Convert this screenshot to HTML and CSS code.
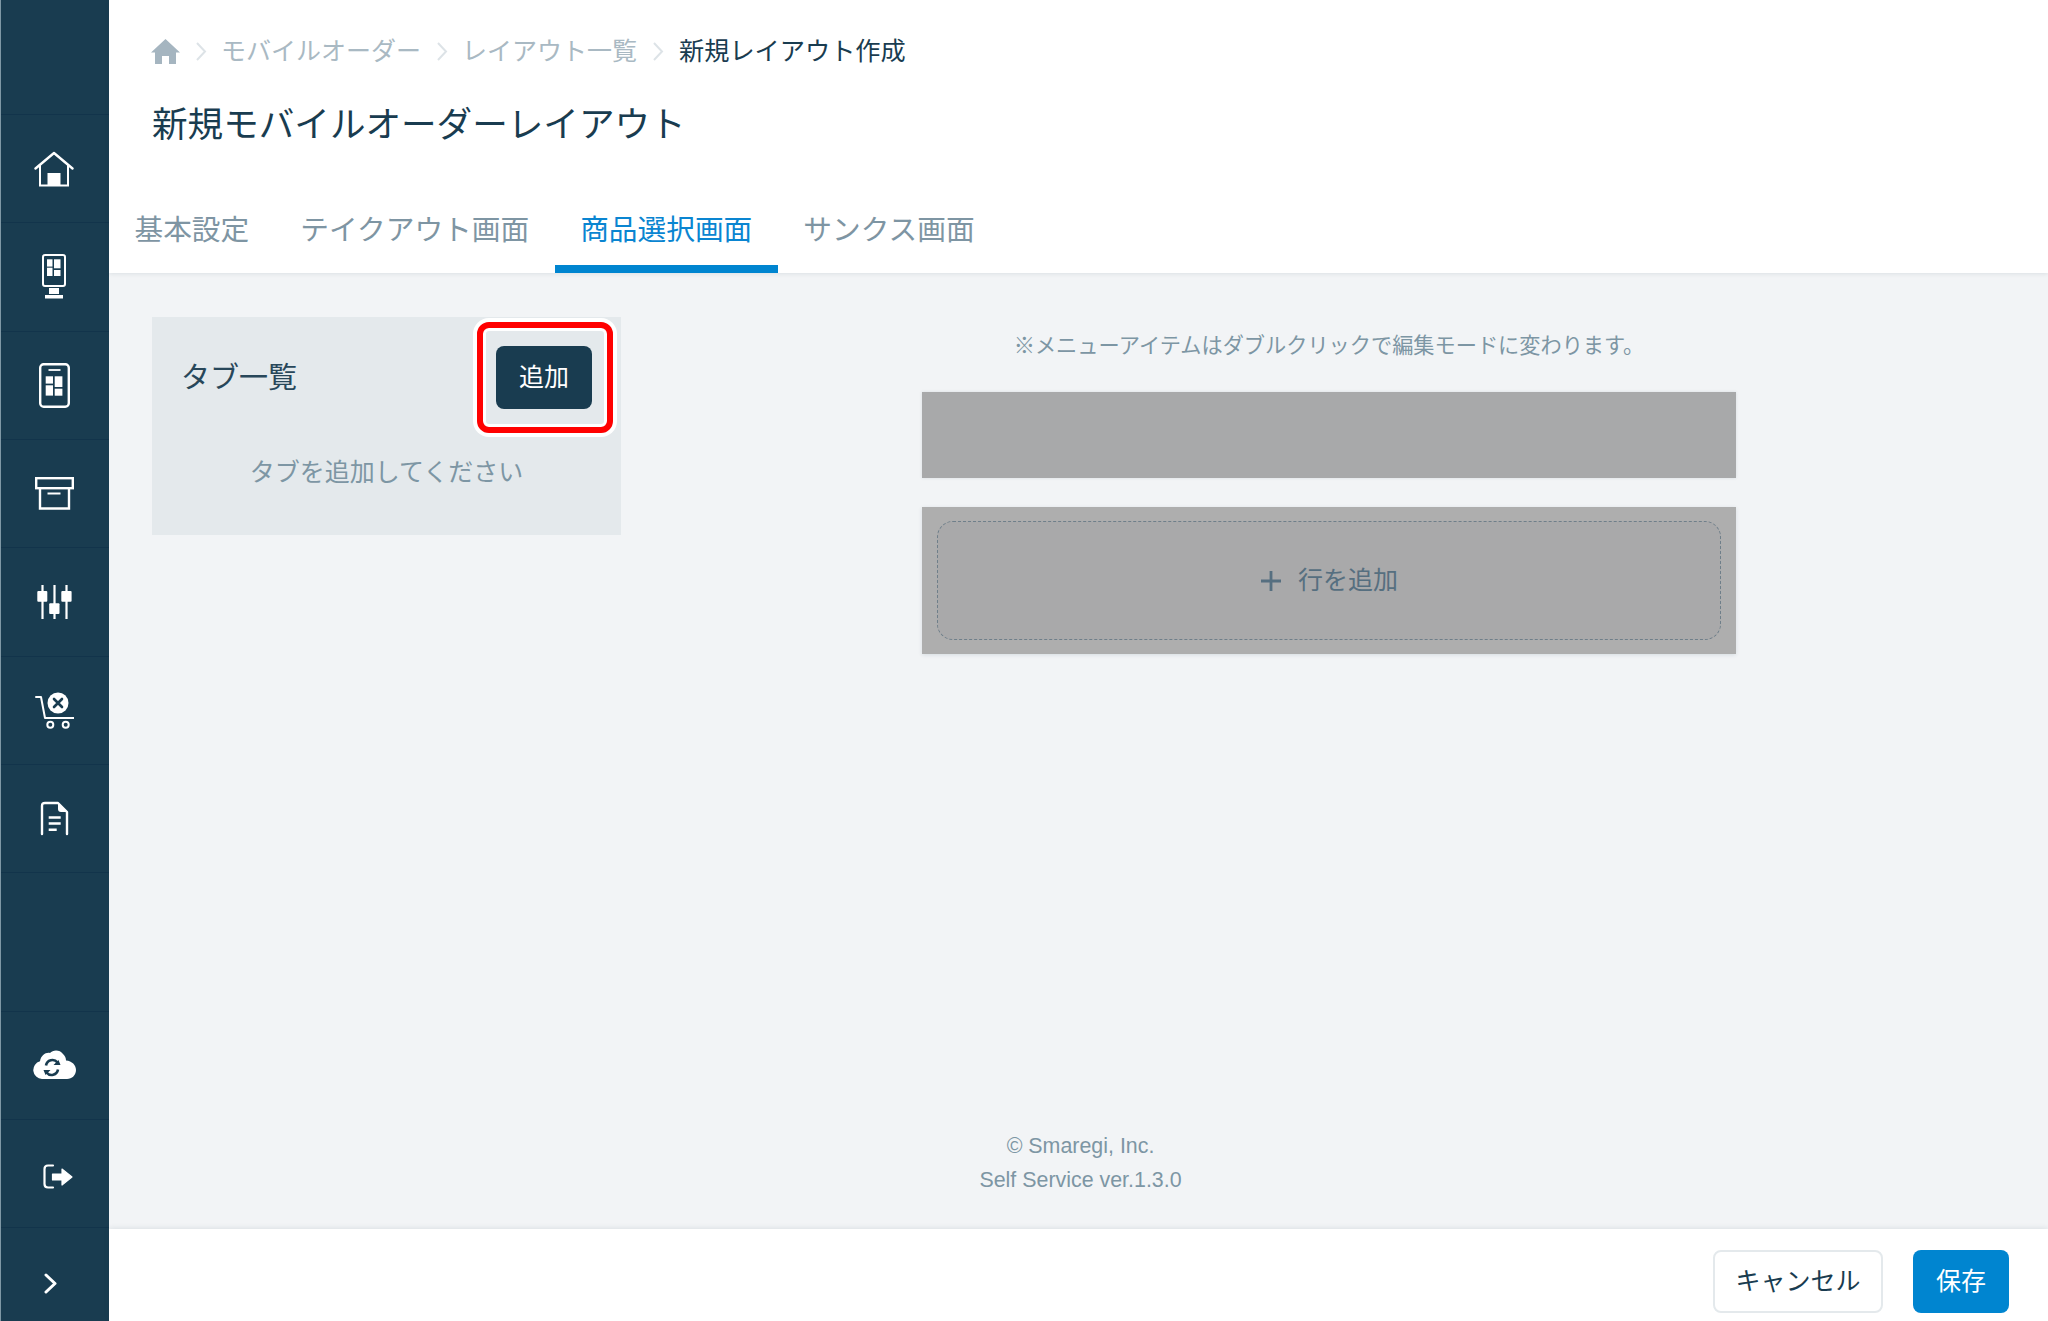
FILE: index.html
```html
<!DOCTYPE html>
<html lang="ja">
<head>
<meta charset="utf-8">
<title>新規モバイルオーダーレイアウト</title>
<link rel="stylesheet" href="styles.css">
</head>
<body>
<div class="app">
  <nav class="sidebar">
    <div class="brand"></div>
    <a class="nav-item"><svg width="40" height="36" viewBox="0 0 40 36"><path d="M1.500 17.500 20 2l18.500 15.500" fill="none" stroke="#fff" stroke-width="2.400" stroke-linecap="round" stroke-linejoin="round"/><path d="M6 14v20.500h28V14" fill="none" stroke="#fff" stroke-width="2"/><rect x="13.500" y="22" width="13" height="12" fill="#fff"/></svg></a>
    <a class="nav-item"><svg width="24" height="45" viewBox="0 0 24 45"><rect x="1" y="1" width="22" height="31" rx="2" fill="none" stroke="#fff" stroke-width="2"/><g fill="#fff"><rect x="5" y="5.300" width="5.500" height="7.300"/><rect x="12" y="5.300" width="6.500" height="9"/><rect x="5" y="13.700" width="5.500" height="8.300"/><rect x="12" y="16" width="6.500" height="6"/><rect x="7" y="34" width="10" height="6"/><rect x="3" y="41" width="18" height="3.500"/></g></svg></a>
    <a class="nav-item"><svg width="31" height="45" viewBox="0 0 31 45"><rect x="1.200" y="1.200" width="28.600" height="42.600" rx="3.500" fill="none" stroke="#fff" stroke-width="2.400"/><path d="M9.500 7h12" stroke="#fff" stroke-width="1.800"/><g fill="#fff"><rect x="6.700" y="13.300" width="7.300" height="7.300"/><rect x="15.700" y="13.300" width="7.700" height="10.700"/><rect x="6.700" y="22.300" width="7.300" height="10.300"/><rect x="15.700" y="25.700" width="7.700" height="7"/></g></svg></a>
    <a class="nav-item"><svg width="39" height="33" viewBox="0 0 39 33"><rect x="1.200" y="1.200" width="36.600" height="10" fill="none" stroke="#fff" stroke-width="2.400"/><path d="M5 11v20.500h29V11" fill="none" stroke="#fff" stroke-width="2.400"/><path d="M12.500 16.500h13" stroke="#fff" stroke-width="2"/></svg></a>
    <a class="nav-item"><svg width="35" height="34" viewBox="0 0 35 34"><path d="M5.500 0v34M17.500 0v34M29.500 0v34" stroke="#fff" stroke-width="2.200"/><g fill="#fff"><rect x="0.300" y="6" width="10" height="10.700" rx="1"/><rect x="12.200" y="18.300" width="10.300" height="10.700" rx="1"/><rect x="24.300" y="6" width="10.300" height="10.700" rx="1"/></g></svg></a>
    <a class="nav-item"><svg width="39" height="37" viewBox="0 0 39 37"><path d="M1 5h5l4 21h28.500" fill="none" stroke="#fff" stroke-width="2" stroke-linecap="round" stroke-linejoin="round"/><circle cx="23" cy="11" r="10.500" fill="#fff"/><path d="m19 7 8 8m0-8-8 8" stroke="#193c50" stroke-width="2.600" stroke-linecap="round"/><circle cx="15.300" cy="32.700" r="3" fill="none" stroke="#fff" stroke-width="2"/><circle cx="30.700" cy="32.700" r="3" fill="none" stroke="#fff" stroke-width="2"/></svg></a>
    <a class="nav-item"><svg width="29" height="35" viewBox="0 0 29 35"><path d="M2 33V5q0-3 3-3h13l9 9v22" fill="none" stroke="#fff" stroke-width="2.400" stroke-linecap="round" stroke-linejoin="round"/><path d="M18 2v6q0 3 3 3h6z" fill="#fff"/><path d="M8.700 16.500h12M8.700 22.500h12M8.700 28.700h8" stroke="#fff" stroke-width="2.400"/></svg></a>
    <div class="nav-spacer"></div>
    <a class="nav-item nav-item-top"><svg width="43" height="29" viewBox="0 0 43 29"><path d="M9 29a9 9 0 0 1-2-17.700C8 5 13 2 17 3c3-3.500 10-3.500 13 1 2 2 3 4 3 6.500 6 .5 10 4.500 10 9.500 0 5-4 9-9 9z" fill="#fff"/><path d="M13 15.500a6.500 6.500 0 0 1 11.500-3M25 19.500a6.500 6.500 0 0 1-11.500 3" fill="none" stroke="#193c50" stroke-width="2.600"/><path d="M27.500 15h-7l5-5zM10.500 20h7l-5 5z" fill="#193c50"/></svg></a>
    <a class="nav-item nav-item-logout"><svg width="30" height="25" viewBox="0 0 30 25"><path d="M10 1.500H5Q1.500 1.500 1.500 5v15q0 3.500 3.500 3.500h5" fill="none" stroke="#fff" stroke-width="2.200" stroke-linecap="round"/><path d="M9.500 10H19V5l10 8-10 8v-5H9.500z" fill="#fff" stroke="#fff" stroke-width="1.200" stroke-linejoin="round"/></svg></a>
    <a class="nav-item nav-item-last"><svg width="13" height="21" viewBox="0 0 13 21"><path d="m2 2 9 8.500L2 19" fill="none" stroke="#fff" stroke-width="3" stroke-linecap="round" stroke-linejoin="round"/></svg></a>
  </nav>
  <div class="main">
    <header class="header">
      <ol class="crumbs">
        <li class="crumb-home"><svg width="29" height="25" viewBox="0 0 29 25"><path d="M14.500 0 29 13.500h-4V25h-7v-8h-7v8H4V13.500H0z" fill="#a5b5c0"/></svg></li>
        <li class="crumb-sep"><svg width="12" height="19" viewBox="0 0 12 19"><path d="m2 1 8 8.500L2 18" fill="none" stroke="#dde3e7" stroke-width="2"/></svg></li>
        <li class="crumb">モバイルオーダー</li>
        <li class="crumb-sep"><svg width="12" height="19" viewBox="0 0 12 19"><path d="m2 1 8 8.500L2 18" fill="none" stroke="#dde3e7" stroke-width="2"/></svg></li>
        <li class="crumb">レイアウト一覧</li>
        <li class="crumb-sep"><svg width="12" height="19" viewBox="0 0 12 19"><path d="m2 1 8 8.500L2 18" fill="none" stroke="#dde3e7" stroke-width="2"/></svg></li>
        <li class="crumb crumb-current">新規レイアウト作成</li>
      </ol>
      <h1 class="title">新規モバイルオーダーレイアウト</h1>
      <div class="tabs">
        <a class="tab">基本設定</a>
        <a class="tab">テイクアウト画面</a>
        <a class="tab tab-active">商品選択画面</a>
        <a class="tab">サンクス画面</a>
      </div>
    </header>
    <main class="content">
      <div class="columns">
        <section class="panel">
          <div class="panel-head">
            <h2 class="panel-title">タブ一覧</h2>
            <div class="add-wrap">
              <button class="btn-add">追加</button>
              <span class="highlight"></span>
            </div>
          </div>
          <p class="panel-empty">タブを追加してください</p>
        </section>
        <section class="preview">
          <p class="note">※メニューアイテムはダブルクリックで編集モードに変わります。</p>
          <div class="bar"></div>
          <div class="row-box">
            <div class="row-add"><svg width="22" height="22" viewBox="0 0 22 22"><path d="M11 1v20M1 11h20" stroke="#566f80" stroke-width="2.800"/></svg><span>行を追加</span></div>
          </div>
        </section>
      </div>
      <footer class="copyright">
        <div>© Smaregi, Inc.</div>
        <div>Self Service ver.1.3.0</div>
      </footer>
    </main>
    <div class="actions">
      <button class="btn btn-cancel">キャンセル</button>
      <button class="btn btn-save">保存</button>
    </div>
  </div>
</div>
</body>
</html>
```
FILE: styles.css
```css
* { box-sizing: border-box; }
html, body { margin: 0; height: 100%; }
body {
  font-family: "Liberation Sans", "Noto Sans CJK JP", sans-serif;
  background: #f2f4f6;
  color: #193c50;
}
.app { display: flex; height: 1321px; overflow: hidden; }

.sidebar {
  width: 109px;
  flex: none;
  display: flex;
  flex-direction: column;
  background: #193c50;
  border-left: 1px solid #7f98a5;
}
.brand { height: 115px; border-bottom: 1px solid #12344b; flex: none; }
.nav-item {
  height: 108.330px;
  flex: none;
  display: flex;
  align-items: center;
  justify-content: center;
  padding-right: 2px;
  border-bottom: 1px solid #12344b;
}
.nav-spacer { flex: 1; }
.nav-item-top { border-top: 1px solid #12344b; padding-bottom: 3px; }
.nav-item-logout { padding: 6px 0 0 6px; }
.nav-item-last { border-bottom: 0; height: 93px; padding: 18px 10px 0 0; }

.main { flex: 1; min-width: 0; display: flex; flex-direction: column; }

.header {
  background: #fff;
  height: 273px;
  flex: none;
  position: relative;
  box-shadow: 0 1px 4px rgba(25, 60, 80, .1);
}
.crumbs {
  list-style: none;
  margin: 0;
  padding: 32px 0 0 42px;
  display: flex;
  align-items: center;
  height: 70px;
  font-size: 25px;
  line-height: 40px;
  color: #a9b9c3;
}
.crumb-home, .crumb-sep { display: flex; }
.crumb-home { margin-right: 15px; }
.crumb-sep { margin-right: 14px; }
.crumb { margin-right: 15px; }
.crumb-current { color: #193c50; margin-left: 1px; font-size: 25.200px; }
.title {
  margin: 35px 0 0 43px;
  font-size: 35.600px;
  line-height: 40px;
  font-weight: 400;
  color: #193c50;
}
.tabs { display: flex; margin-top: 48px; }
.tab {
  padding: 17px 25.500px 0;
  height: 80px;
  font-size: 28.700px;
  line-height: 40px;
  color: #7e95a3;
  border-bottom: 8px solid transparent;
}
.tab-active { color: #0a85d1; border-bottom-color: #0085d0; }

.content { flex: 1; display: flex; flex-direction: column; min-height: 0; }
.columns { display: flex; padding: 44px 0 0 43px; flex: 1; align-items: flex-start; }

.panel {
  width: 469px;
  height: 218px;
  background: #e4e9ec;
  padding: 29px 29px 0 29px;
}
.panel-head { display: flex; justify-content: space-between; align-items: center; }
.panel-title { margin: 0; font-size: 29px; font-weight: 400; line-height: 40px; color: #28475a; }
.add-wrap { position: relative; display: flex; }
.btn-add {
  width: 96px;
  height: 63px;
  border: 0;
  border-radius: 8px;
  background: #193c50;
  color: #fff;
  font: inherit;
  font-size: 25px;
  padding: 0 0 5px;
}
.highlight {
  position: absolute;
  left: -19px;
  top: -24px;
  width: 136px;
  height: 111px;
  border: 6px solid #f00;
  border-radius: 12px;
  box-shadow: 0 0 0 4px #fff, inset 0 0 0 3px #fff;
}
.panel-empty {
  margin: 43px 0 0;
  text-align: center;
  font-size: 25px;
  line-height: 40px;
  color: #7d96a4;
}

.preview { width: 814px; margin-left: 301px; }
.note {
  margin: 0 0 17px;
  height: 58px;
  text-align: center;
  font-size: 21.200px;
  line-height: 58px;
  color: #7d96a4;
}
.bar { height: 86px; margin-bottom: 29px; background: #a8a9aa; box-shadow: 0 0 3px rgba(25, 60, 80, .12); }
.row-box { height: 147px; padding: 14px 15px; background: #aeaeae; box-shadow: 0 1px 4px rgba(25, 60, 80, .12); }
.row-add {
  height: 119px;
  display: flex;
  align-items: center;
  justify-content: center;
  gap: 16px;
  background: #a9a9aa;
  border: 1px dashed #6f7f8a;
  border-radius: 16px;
  font-size: 25px;
  color: #566f80;
}
.row-add span { padding-bottom: 5px; }

.copyright {
  flex: none;
  padding-bottom: 32px;
  text-align: center;
  font-size: 21.400px;
  line-height: 34px;
  color: #7d96a4;
  margin-left: 4px;
}

.actions {
  height: 92px;
  flex: none;
  display: flex;
  justify-content: flex-end;
  gap: 30px;
  padding: 21px 39px 0 0;
  background: #fff;
  box-shadow: 0 -1px 5px rgba(25, 60, 80, .1);
  position: relative;
}
.btn {
  height: 63px;
  border-radius: 8px;
  font: inherit;
  font-size: 25px;
  padding: 0 0 5px;
}
.btn-cancel { width: 170px; background: #fff; border: 2px solid #e4e9ec; color: #193c50; }
.btn-save { width: 96px; background: #0085d0; border: 0; color: #fff; }
```
